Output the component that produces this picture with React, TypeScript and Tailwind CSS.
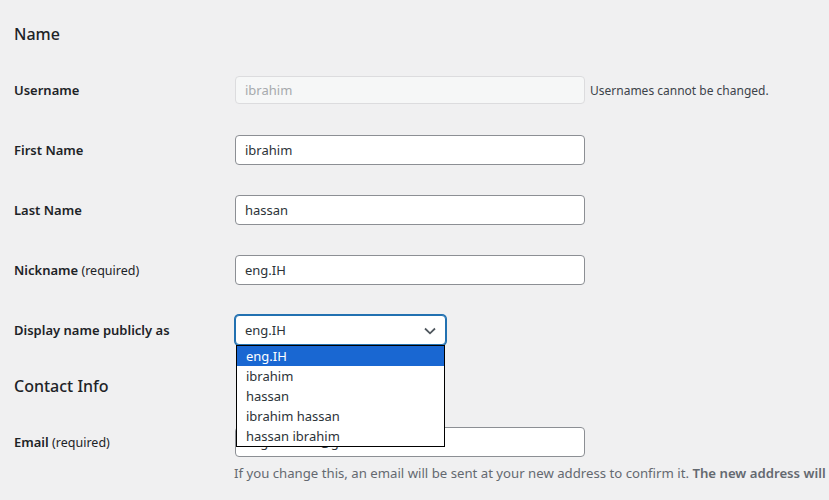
import React from 'react';

const font = { fontFamily: '"Noto Sans", "Open Sans", sans-serif' };

function Row({ label, note, children }: { label: string; note?: string; children: React.ReactNode }) {
  return (
    <div className="flex h-[60px] items-center">
      <div className="w-[221px] shrink-0 pt-[2px] text-[13px] font-semibold text-[#1d2327]">
        {label}
        {note && <span className="font-normal text-[12.5px]"> {note}</span>}
      </div>
      {children}
    </div>
  );
}

function TextInput({ value, disabled }: { value: string; disabled?: boolean }) {
  return (
    <div
      className={
        disabled
          ? 'flex h-[28px] w-[350px] items-center rounded border border-[#dcdcde] bg-[#f6f7f7] px-[9px] pt-px text-[13px] text-[#a7aaad]'
          : 'flex h-[30px] w-[350px] items-center rounded border border-[#8c8f94] bg-white px-[9px] pt-px text-[13px] text-[#2c3338]'
      }
    >
      {value}
    </div>
  );
}

const options = ['eng.IH', 'ibrahim', 'hassan', 'ibrahim hassan', 'hassan ibrahim'];

export default function App() {
  return (
    <div className="h-[500px] w-[829px] overflow-hidden bg-[#f0f0f1] pl-[14px]" style={font}>
      <h2 className="flex h-[60px] items-center pt-2 text-[16px] font-medium text-[#1d2327]">Name</h2>

      <Row label="Username">
        <TextInput value="ibrahim" disabled />
        <span className="ml-[5px] pt-[2px] text-[12px] whitespace-nowrap text-[#3c434a]">Usernames cannot be changed.</span>
      </Row>
      <Row label="First Name">
        <TextInput value="ibrahim" />
      </Row>
      <Row label="Last Name">
        <TextInput value="hassan" />
      </Row>
      <Row label="Nickname" note="(required)">
        <TextInput value="eng.IH" />
      </Row>
      <Row label="Display name publicly as">
        <div className="relative z-10">
          <div className="flex h-[30px] w-[211px] items-center justify-between rounded border border-[#2271b1] bg-white pl-[9px] pr-[9px] pt-px text-[13px] text-[#2c3338] shadow-[0_0_0_1px_#2271b1]">
            <span>eng.IH</span>
            <svg width="12" height="8" viewBox="0 0 12 8" fill="none" stroke="#50575e" strokeWidth="1.8">
              <path d="M1 1.5 6 6.3 11 1.5" />
            </svg>
          </div>
          <div className="absolute left-px top-full w-[209px] border border-black bg-white">
            {options.map((o, i) => (
              <div
                key={o}
                className={
                  i === 0
                    ? 'flex h-[20px] items-center bg-[#1967d2] pl-[9px] pt-px text-[13px] text-white'
                    : 'flex h-[20px] items-center pl-[9px] pt-px text-[13px] text-[#2c3338]'
                }
              >
                {o}
              </div>
            ))}
          </div>
        </div>
      </Row>

      <h2 className="flex h-[52px] items-center text-[16px] font-medium text-[#1d2327]">Contact Info</h2>

      <div className="flex h-[60px] items-center">
        <div className="w-[221px] shrink-0 pt-[2px] text-[13px] font-semibold text-[#1d2327]">
          Email <span className="font-normal text-[12.5px]">(required)</span>
        </div>
        <TextInput value="eng.ibrahim@gmail.com" />
      </div>
      <p className="-mt-[8px] ml-[220px] whitespace-nowrap text-[13.2px] text-[#646970]">
        If you change this, an email will be sent at your new address to confirm it.{' '}
        <strong className="font-semibold">The new address will not become active until confirmed.</strong>
      </p>
    </div>
  );
}
